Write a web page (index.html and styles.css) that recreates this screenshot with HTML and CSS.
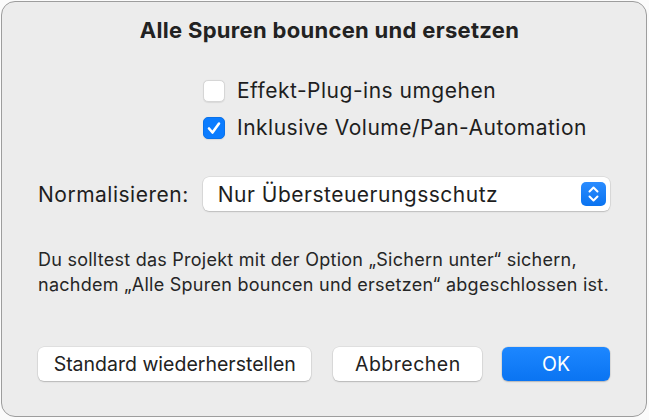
FILE: index.html
```html
<!DOCTYPE html>
<html lang="de">
<head>
  <meta charset="UTF-8" />
  <title>Alle Spuren bouncen und ersetzen</title>
  <link rel="stylesheet" href="styles.css">
</head>
<body>
  <div class="dialog">
    <h1 class="title">Alle Spuren bouncen und ersetzen</h1>

    <div class="options">
      <label class="check">
        <span class="box"></span>
        <span>Effekt-Plug-ins umgehen</span>
      </label>
      <label class="check">
        <span class="box on">
          <svg width="22" height="22" viewBox="0 0 22 22"><path d="M6 11.5 L9.5 15.5 L16 6.5" fill="none" stroke="#fff" stroke-width="2.6" stroke-linecap="round" stroke-linejoin="round"/></svg>
        </span>
        <span>Inklusive Volume/Pan-Automation</span>
      </label>
    </div>

    <div class="field">
      <span class="field-label">Normalisieren:</span>
      <div class="popup">
        <span>Nur Übersteuerungsschutz</span>
        <span class="stepper">
          <svg width="25" height="24" viewBox="0 0 25 24"><path d="M8.5 9.5 L12.5 5.5 L16.5 9.5 M8.5 14.5 L12.5 18.5 L16.5 14.5" fill="none" stroke="#fff" stroke-width="2" stroke-linecap="round" stroke-linejoin="round"/></svg>
        </span>
      </div>
    </div>

    <p class="note">Du solltest das Projekt mit der Option „Sichern unter“ sichern, nachdem „Alle Spuren bouncen und ersetzen“ abgeschlossen ist.</p>

    <div class="buttons">
      <button class="btn btn-reset">Standard wiederherstellen</button>
      <button class="btn btn-cancel">Abbrechen</button>
      <button class="btn btn-ok">OK</button>
    </div>
  </div>
</body>
</html>
```

FILE: styles.css
```css
body {
  margin: 0;
  background: #fbfbfb;
  font-family: Inter, Roboto, "Liberation Sans", sans-serif;
  color: #1e1e1e;
}
.dialog {
  box-sizing: border-box;
  width: 646px;
  height: 416px;
  margin: 1px 0 0 1px;
  padding: 0 36px;
  background: #ececec;
  border: 1.5px solid #9d9d9d;
  border-radius: 14px;
  display: flex;
  flex-direction: column;
}
.title {
  margin: 15px 0 0;
  padding-left: 11px;
  font-size: 22px;
  line-height: 26px;
  font-weight: 700;
  letter-spacing: 0.3px;
  text-align: center;
  color: #222;
}
.options {
  margin: 37px 0 0 165px;
  display: flex;
  flex-direction: column;
  gap: 15px;
}
.check {
  display: flex;
  align-items: center;
  gap: 12px;
  font-size: 21px;
  line-height: 22px;
  letter-spacing: 0.5px;
}
.box {
  box-sizing: border-box;
  width: 22px;
  height: 22px;
  border-radius: 5px;
  background: #fff;
  border: 1px solid #d6d6d6;
  box-shadow: 0 0.5px 1px rgba(0, 0, 0, 0.08);
}
.box.on {
  background: #0b7cff;
  border-color: #0a72ea;
}
.box svg {
  display: block;
  margin: -1px;
}
.field {
  margin-top: 38px;
  display: flex;
  align-items: center;
  gap: 14px;
  font-size: 21px;
  letter-spacing: 0.5px;
}
.field-label {
  width: 151px;
}
.popup {
  box-sizing: border-box;
  width: 408px;
  height: 34px;
  padding: 0 4px 0 15px;
  background: #fff;
  border-radius: 6px;
  box-shadow: 0 0 0 0.5px rgba(0, 0, 0, 0.12), 0 1px 1.5px rgba(0, 0, 0, 0.15);
  display: flex;
  align-items: center;
  justify-content: space-between;
}
.stepper {
  width: 25px;
  height: 24px;
  border-radius: 5px;
  background: linear-gradient(#2a8cff, #0a73f0);
}
.stepper svg {
  display: block;
}
.note {
  margin: 36px -12px 0 0;
  font-size: 18px;
  line-height: 25px;
  letter-spacing: 0.25px;
  color: #262626;
}
.buttons {
  margin-top: auto;
  margin-bottom: 35px;
  display: flex;
}
.btn {
  height: 34px;
  border: none;
  border-radius: 6px;
  font-family: inherit;
  font-size: 19.5px;
  color: #222;
  background: #fff;
  box-shadow: 0 0 0 0.5px rgba(0, 0, 0, 0.1), 0 1px 1.5px rgba(0, 0, 0, 0.18);
  padding: 0;
}
.btn-reset {
  width: 274px;
}
.btn-cancel {
  width: 149px;
  margin-left: 22px;
  letter-spacing: 0.5px;
}
.btn-ok {
  width: 108px;
  margin-left: 20px;
  color: #fff;
  background: linear-gradient(#1d87ff, #0a74f2);
}
```
